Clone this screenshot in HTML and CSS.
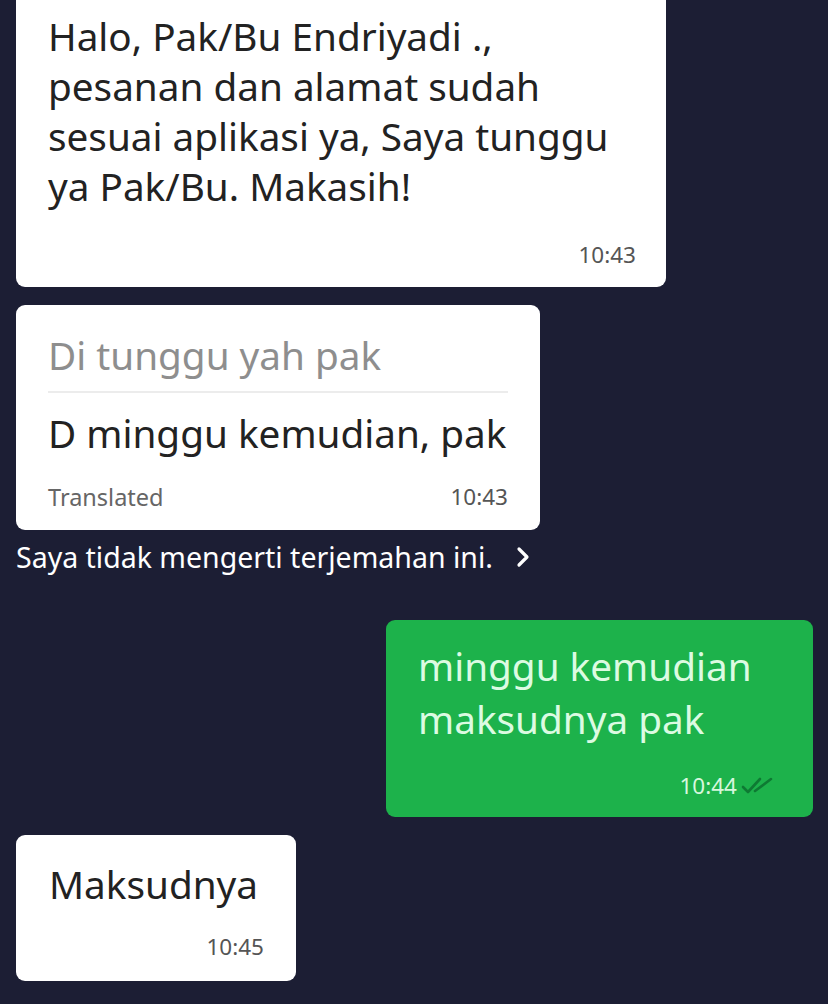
FILE: index.html
```html
<!DOCTYPE html>
<html lang="id">
<head>
    <meta charset="UTF-8">
    <meta name="viewport" content="width=device-width, initial-scale=1.0">
    <title>Chat</title>
    <link rel="stylesheet" href="styles.css">
</head>
<body>
    <div class="chat">
        <!-- incoming, scrolled past the top -->
        <div class="bubble in first">
            <p class="msg">Halo, Pak/Bu Endriyadi .,<br>pesanan dan alamat sudah<br>sesuai aplikasi ya, Saya tunggu<br>ya Pak/Bu. Makasih!</p>
            <div class="meta"><span class="time">10:43</span></div>
        </div>

        <!-- incoming with translation -->
        <div class="bubble in translated">
            <p class="msg original">Di tunggu yah pak</p>
            <div class="divider"></div>
            <p class="msg trans-text">D minggu kemudian, pak</p>
            <div class="meta split"><span class="label">Translated</span><span class="time">10:43</span></div>
        </div>
        <div class="feedback">
            <span>Saya tidak mengerti terjemahan ini.</span>
            <svg class="chevron" viewBox="0 0 16 24" width="16" height="24">
                <path d="M4 4l8 8-8 8" fill="none" stroke="#fff" stroke-width="3.2" stroke-linecap="round" stroke-linejoin="round"/>
            </svg>
        </div>

        <!-- outgoing -->
        <div class="bubble out">
            <p class="msg">minggu kemudian<br>maksudnya pak</p>
            <div class="meta">
                <span class="time">10:44</span>
                <svg class="ticks" viewBox="0 0 34 20" width="34" height="20">
                    <path d="M2 11l5 5L19 3" fill="none" stroke="#0e7a33" stroke-width="2.6" stroke-linecap="round" stroke-linejoin="round"/>
                    <path d="M14 15L30 3" fill="none" stroke="#0e7a33" stroke-width="2.6" stroke-linecap="round"/>
                </svg>
            </div>
        </div>

        <!-- incoming -->
        <div class="bubble in short">
            <p class="msg">Maksudnya</p>
            <div class="meta"><span class="time">10:45</span></div>
        </div>
    </div>
</body>
</html>
```

FILE: styles.css
```css
/* Chat screen */
html, body {
    margin: 0;
    background-color: #1c1e34;
    font-family: "Noto Sans", "Open Sans", sans-serif;
}
.chat {
    display: flex;
    flex-direction: column;
    padding: 0 15px 0 16px;
}
.bubble {
    background-color: #fff;
    border-radius: 9px;
    box-sizing: border-box;
}
.msg {
    margin: 0;
    font-size: 38.7px;
    line-height: 50px;
    color: #222;
}
.meta {
    display: flex;
    justify-content: flex-end;
    align-items: center;
    font-size: 22.5px;
    line-height: 24px;
    color: #555;
}
.meta.split {
    justify-content: space-between;
}

/* first message, top cut off by the scroll */
.first {
    width: 650px;
    padding: 11px 30px 20px 32px;
    border-radius: 0 0 9px 9px;
}
.first .meta {
    margin-top: 32px;
}

.translated {
    width: 524px;
    margin-top: 18px;
    padding: 25px 32px 21px 32px;
}
.original {
    color: #8e8e8e;
}
.divider {
    height: 2px;
    background-color: #ececec;
    margin: 11px 0 15px;
}
.translated .meta {
    margin-top: 27px;
}
.label {
    font-size: 23.5px;
    color: #666;
}

.feedback {
    display: flex;
    align-items: center;
    margin-top: 15px;
    color: #fff;
    font-size: 28.5px;
    line-height: 24px;
}
.chevron {
    margin-left: 22px;
}

.out {
    align-self: flex-end;
    width: 427px;
    margin-top: 51px;
    padding: 20px 38px 19px 32px;
    background-color: #1db24b;
}
.out .msg {
    color: #dcfbe2;
    line-height: 53px;
}
.out .meta {
    margin-top: 28px;
    color: #d7f7dd;
}
.ticks {
    margin-left: 4px;
}

.short {
    width: 280px;
    margin-top: 18px;
    padding: 24px 32px 22px 33px;
}
.short .meta {
    margin-top: 26px;
}
```
